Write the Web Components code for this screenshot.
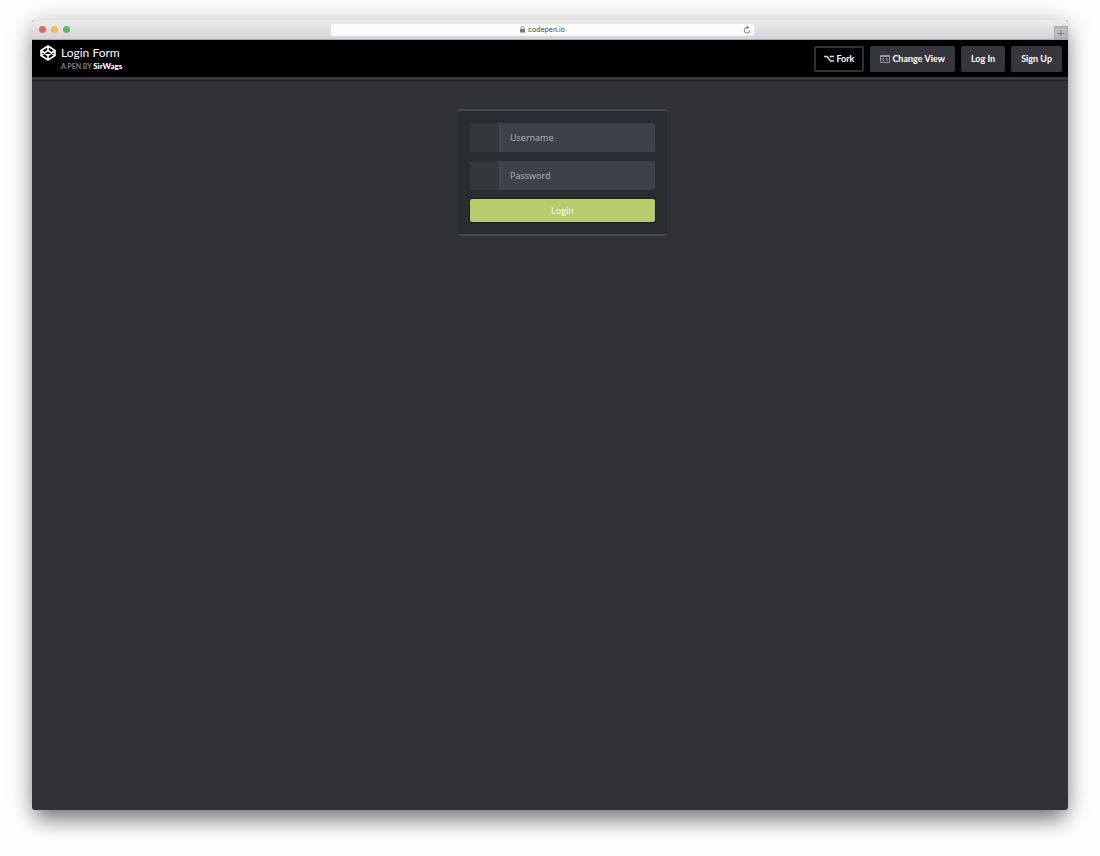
<!DOCTYPE html>
<html lang="en">
<head>
<meta charset="utf-8">
<title>Login Form</title>
<style>
  html, body { margin: 0; background: #fefefe; }
  body { min-height: 100vh; display: flex; flex-direction: column; font-family: Lato, sans-serif; }
</style>
</head>
<body>
<browser-window address="codepen.io">
  <pen-header heading="Login Form" author="SirWags">
    <pen-button variant="outline">
      <svg slot="icon" width="10" height="8" viewBox="0 0 10 8" fill="none" stroke="#d5d5d5" stroke-width="1.3"><path d="M0 1.5H3L6.5 6H10M5.5 1.5H10"/></svg>Fork</pen-button>
    <pen-button>
      <svg slot="icon" width="10" height="8" viewBox="0 0 10 8" fill="none" stroke="#8f98aa" stroke-width="1"><path d="M.5 .5H9.5V7.5H.5ZM.5 1.5H9.5"/><path d="M4 3L2.5 4.5L4 6M6 3L7.5 4.5L6 6" stroke="#aab2c4"/></svg>Change View</pen-button>
    <pen-button>Log In</pen-button>
    <pen-button>Sign Up</pen-button>
  </pen-header>
  <login-form></login-form>
</browser-window>
<script>
class BrowserWindow extends HTMLElement {
  connectedCallback() {
    this.attachShadow({ mode: 'open' }).innerHTML = `
      <style>
        :host { flex: 1; display: flex; flex-direction: column; margin: 20px 32px 46px; border-radius: 3px; background: #303236;
          box-shadow: 0 14px 20px -4px rgba(0,0,0,.42), 0 2px 24px rgba(0,0,0,.26); overflow: hidden; }
        .bar { box-sizing: border-box; height: 20px; display: grid; grid-template-columns: 299px minmax(0,423px) 1fr; align-items: center;
          background: linear-gradient(#ededee, #d3d3d5); border-bottom: 1px solid #aaa; }
        .lights { display: flex; gap: 5px; padding-left: 7px; }
        i { width: 7px; height: 7px; border-radius: 50%; background: #df6560; }
        i:nth-child(2) { background: #e8bd5c; }
        i:nth-child(3) { background: #60b862; }
        .address { height: 12px; border-radius: 2px; background: #fbfbfc; display: grid; grid-template-columns: 1fr auto 1fr; align-items: center; }
        .host { grid-column: 2; display: flex; align-items: center; gap: 3px; font: 7px/12px Inter, sans-serif; color: #444; }
        button { border: 0; padding: 0; background: none; display: grid; place-items: center; }
        .reload { justify-self: end; width: 14px; height: 12px; }
        .add { justify-self: end; align-self: end; box-sizing: border-box; width: 14px; height: 13px; background: #bbbbbd; border: 1px solid #a9a9ab; }
      </style>
      <div class="bar">
        <div class="lights"><i></i><i></i><i></i></div>
        <div class="address">
          <span class="host"><svg width="5" height="7" viewBox="0 0 5 7"><path d="M0 3H5V6.5H0Z" fill="#777"/><path d="M1 3V1.8A1.5 1.5 0 0 1 4 1.8V3" fill="none" stroke="#777" stroke-width=".8"/></svg><span class="name"></span></span>
          <button class="reload" aria-label="Reload"><svg width="8" height="8" viewBox="0 0 8 8"><path d="M4 1.5A2.8 2.8 0 1 0 6.8 4.3" fill="none" stroke="#666" stroke-width=".8"/><path d="M3.8 0L6 1.5L3.8 3Z" fill="#555"/></svg></button>
        </div>
        <button class="add" aria-label="New tab"><svg width="8" height="8" viewBox="0 0 8 8" stroke="#777"><path d="M0.5 4.5H7.5M4 1V8" stroke-width=".9"/></svg></button>
      </div>
      <slot></slot>`;
    this.shadowRoot.querySelector('.name').textContent = this.getAttribute('address');
  }
}
class PenHeader extends HTMLElement {
  connectedCallback() {
    this.attachShadow({ mode: 'open' }).innerHTML = `
      <style>
        :host { display: block; border-bottom: 1px solid #1c1d20; background: #38393e; padding-bottom: 3px; }
        header { box-sizing: border-box; height: 37px; background: #000; display: flex; justify-content: space-between; align-items: center; padding: 0 6px 0 8px; }
        .title { padding-bottom: 2px; display: grid; grid-template-columns: 16px auto; column-gap: 5px; align-items: center; color: #fff; }
        h1 { margin: 0; font-size: 12px; line-height: 16px; font-weight: 400; }
        p { grid-column: 2; margin: 0; font-size: 7px; line-height: 10px; font-weight: 700; color: #808084; }
        a { color: #fff; text-decoration: none; font-size: 8px; font-weight: 900; }
        nav { display: flex; gap: 6px; }
        svg { display: block; }
      </style>
      <header>
        <div class="title">
          <svg width="16" height="16" viewBox="0 0 16 16" fill="none" stroke="#fff" stroke-width="1.6" stroke-linejoin="round"><path d="M8 1L15 5.5V10.5L8 15L1 10.5V5.5ZM8 1V5.5M8 10.5V15M1 5.5L8 10.5L15 5.5M1 10.5L8 5.5L15 10.5"/></svg>
          <h1></h1>
          <p>A PEN BY <a href="#"></a></p>
        </div>
        <nav><slot></slot></nav>
      </header>`;
    this.shadowRoot.querySelector('h1').textContent = this.getAttribute('heading');
    this.shadowRoot.querySelector('a').textContent = this.getAttribute('author');
  }
}
class PenButton extends HTMLElement {
  connectedCallback() {
    this.attachShadow({ mode: 'open' }).innerHTML = `
      <style>
        :host { display: block; }
        button { box-sizing: border-box; height: 26px; padding: 0 8px; border: 2px solid #36373c; border-radius: 2px; background: #36373c; color: #fff;
          font: 700 9px/12px Lato, sans-serif; display: flex; align-items: center; gap: 2px; white-space: nowrap; }
        :host([variant=outline]) button { background: #000; border-color: #303136; }
      </style>
      <button type="button"><slot name="icon"></slot><span><slot></slot></span></button>`;
  }
}
class LoginForm extends HTMLElement {
  connectedCallback() {
    this.attachShadow({ mode: 'open' }).innerHTML = `
      <style>
        :host { flex: 1; display: flex; justify-content: center; align-items: flex-start; padding: 28px 0 28px 25px; font-family: "Open Sans", sans-serif; }
        form { box-sizing: border-box; width: 209px; padding: 12px; border: solid #434a52; border-width: 2px 0; border-radius: 3px; background: #292d31;
          display: flex; flex-direction: column; gap: 9px; }
        .field { height: 29px; display: flex; border-radius: 2px; overflow: hidden; background: #3d4148; }
        label { box-sizing: border-box; width: 31px; background: #34383d; border-right: 2px solid #434850; }
        input { flex: 1; min-width: 0; box-sizing: border-box; border: 0; padding: 0 9px; background: #3d4148; color: #b5b9be; font: 9px/14px "Open Sans", sans-serif; }
        input::placeholder { color: #b0b4b9; opacity: 1; }
        button { height: 23px; border: 0; padding: 0; border-radius: 2px; background: #b8cc6e; color: #fff; font: 9px/14px "Open Sans", sans-serif; box-shadow: 0 0 0 1px #1b1e18; }
      </style>
      <form>
        <div class="field"><label for="user" aria-label="Username"></label><input id="user" type="text" placeholder="Username"></div>
        <div class="field"><label for="pass" aria-label="Password"></label><input id="pass" type="password" placeholder="Password"></div>
        <button type="submit">Login</button>
      </form>`;
  }
}
customElements.define('pen-button', PenButton);
customElements.define('pen-header', PenHeader);
customElements.define('login-form', LoginForm);
customElements.define('browser-window', BrowserWindow);
</script>
</body>
</html>
